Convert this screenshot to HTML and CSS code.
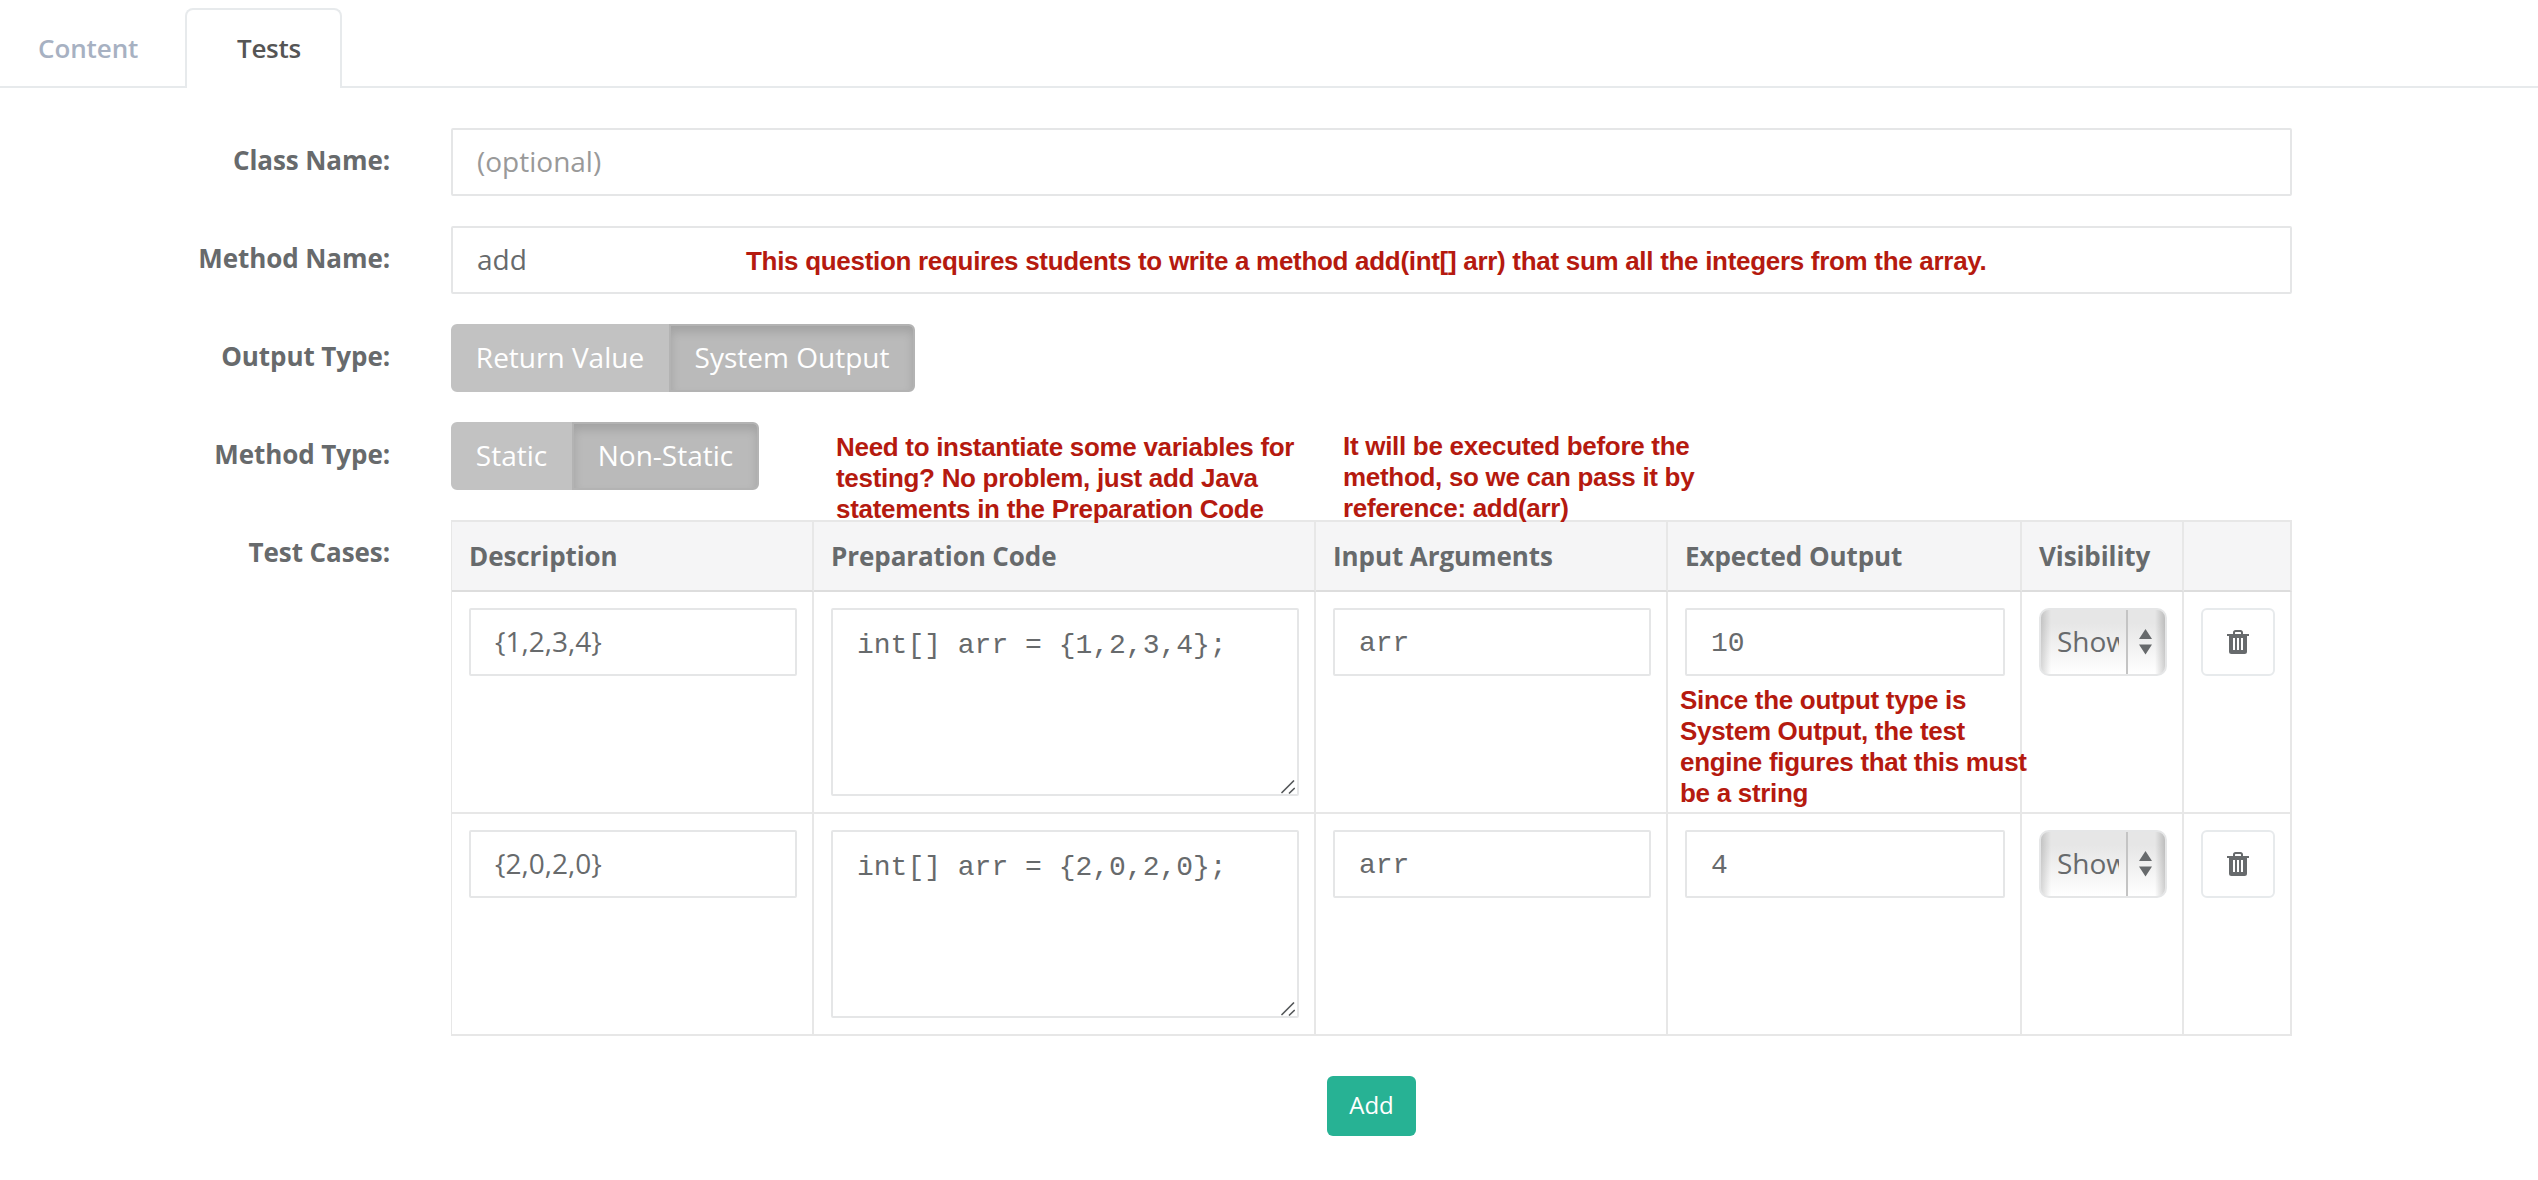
FILE: index.html
```html
<!DOCTYPE html>
<html lang="en">
<head>
<meta charset="utf-8">
<title>Tests</title>
<link rel="stylesheet" href="styles.css">
</head>
<body>
<svg class="defs" width="0" height="0">
  <symbol id="trash" viewBox="0 0 22 24"><path fill-rule="evenodd" d="M6 4V2.500C6 1 7 0 8.500 0h5C15 0 16 1 16 2.500V4h6v2h-2v15.500a2.500 2.500 0 0 1-2.500 2.500h-13A2.500 2.500 0 0 1 2 21.500V6H0V4zM8 4h6V2.500L13.500 2h-5L8 2.500zM6 8v12h2V8zM10 8v12h2V8zM14 8v12h2V8z"/></symbol>
  <symbol id="grip" viewBox="0 0 14 14"><path fill="none" stroke="#55585a" stroke-width="1.700" stroke-linecap="round" d="M1 12.500L12.500 1M8.500 13L13.200 8.500"/></symbol>
</svg>
<nav class="tabs"><a class="tab">Content</a><a class="tab active">Tests</a></nav>
<main class="form">
  <div class="row"><label>Class Name:</label><input class="field" placeholder="(optional)"></div>
  <div class="row"><label>Method Name:</label><input class="field" value="add"></div>
  <div class="row"><label>Output Type:</label><div class="group"><button class="return">Return Value</button><button class="on system">System Output</button></div></div>
  <div class="row"><label>Method Type:</label><div class="group"><button class="static">Static</button><button class="on nonstatic">Non-Static</button></div></div>
  <div class="row cases"><label>Test Cases:</label>
    <div>
    <table>
      <colgroup><col class="c1"><col class="c2"><col class="c3"><col class="c4"><col class="c5"><col class="c6"></colgroup>
      <thead><tr><th>Description</th><th>Preparation Code</th><th>Input Arguments</th><th>Expected Output</th><th>Visibility</th><th></th></tr></thead>
      <tbody>
      <tr>
        <td><input class="field" value="{1,2,3,4}"></td>
        <td><div class="area"><textarea class="field mono">int[] arr = {1,2,3,4};</textarea><svg class="grip"><use href="#grip"/></svg></div></td>
        <td><input class="field mono" value="arr"></td>
        <td><input class="field mono" value="10"></td>
        <td><div class="select"><span class="value"><span class="clip">Show</span></span><svg class="arrows" viewBox="0 0 13 26"><path d="M0 10L6.500 0L13 10zM0 15.500h13L6.500 25.500z"/></svg></div></td>
        <td><button class="delete"><svg><use href="#trash"/></svg></button></td>
      </tr>
      <tr>
        <td><input class="field" value="{2,0,2,0}"></td>
        <td><div class="area"><textarea class="field mono">int[] arr = {2,0,2,0};</textarea><svg class="grip"><use href="#grip"/></svg></div></td>
        <td><input class="field mono" value="arr"></td>
        <td><input class="field mono" value="4"></td>
        <td><div class="select"><span class="value"><span class="clip">Show</span></span><svg class="arrows" viewBox="0 0 13 26"><path d="M0 10L6.500 0L13 10zM0 15.500h13L6.500 25.500z"/></svg></div></td>
        <td><button class="delete"><svg><use href="#trash"/></svg></button></td>
      </tr>
      </tbody>
    </table>
    <button class="add">Add</button>
    </div>
  </div>
</main>
<p class="note question">This question requires students to write a method add(int[] arr) that sum all the integers from the array.</p>
<p class="note preparation">Need to instantiate some variables for<br>testing? No problem, just add Java<br>statements in the Preparation Code</p>
<p class="note arguments">It will be executed before the<br>method, so we can pass it by<br>reference: add(arr)</p>
<p class="note output">Since the output type is<br>System Output, the test<br>engine figures that this must<br>be a string</p>
</body>
</html>
```
FILE: styles.css
```css
* { box-sizing: border-box; }
body { margin: 0; height: 1180px; overflow: hidden; position: relative; background: #fff; color: #676a6c; font: 26px/36px "Open Sans", sans-serif; }
.defs { position: absolute; }
button, input, textarea { font: inherit; color: inherit; margin: 0; }

.tabs { display: flex; height: 88px; padding-top: 8px; box-shadow: inset 0 -2px #e7eaec; }
.tab { padding: 22px 48px 0 38px; width: 185px; font-weight: 600; letter-spacing: -.1px; color: #a7b1c2; }
.tab.active { width: 157px; padding: 20px 40px 0 50px; letter-spacing: -.3px; color: #555; background: #fff; border: 2px solid #e7eaec; border-bottom: 0; border-radius: 8px 8px 0 0; }

.form { display: grid; gap: 30px; padding: 40px 246px 0 0; }
.row { display: grid; grid-template-columns: 390px 1841px; column-gap: 61px; height: 68px; }
.row > label { text-align: right; padding-top: 14px; font-weight: 700; letter-spacing: -.08px; }
.field { display: block; width: 100%; height: 68px; padding: 0 24px 2px; border: 2px solid #e5e6e7; border-radius: 2px; background: #fff; font-size: 28px; line-height: 40px; outline: 0; }
.field::placeholder { color: #999; opacity: 1; }
.mono { padding: 2px 24px 0; font-family: "Liberation Mono", monospace; }

.group { display: flex; }
.group button { height: 68px; padding: 0 0 2px; border: 2px solid #c2c2c2; background: #c2c2c2; color: #fff; font-size: 28px; font-weight: 400; border-radius: 6px 0 0 6px; }
.group .on { border-color: #b3b3b3; background: #bababa; border-radius: 0 6px 6px 0; box-shadow: inset 0 6px 10px rgba(0,0,0,.125); }
.return { width: 218px; }
.system { width: 246px; }
.static { width: 121px; }
.nonstatic { width: 187px; }

table { width: 1841px; table-layout: fixed; border-spacing: 0; border-left: 1px solid #e7e7e7; }
.c1 { width: 362px; }
.c2 { width: 502px; }
.c3 { width: 352px; }
.c4 { width: 354px; }
.c5 { width: 162px; }
.c6 { width: 108px; }
th { height: 72px; padding: 0 0 0 17px; text-align: left; font-weight: 700; letter-spacing: -.08px; background: #f5f5f6; border: solid #e7e7e7; border-width: 2px 2px 2px 0; border-bottom-color: #ddd; }
td { height: 222px; padding: 16px 15px 0 17px; vertical-align: top; border: solid #e7e7e7; border-width: 0 2px 2px 0; }
.area { position: relative; }
textarea.field { height: 188px; padding-top: 16px; resize: none; overflow: hidden; }
.grip { position: absolute; right: 4px; bottom: 2px; width: 14px; height: 14px; }

.select { display: flex; align-items: center; width: 128px; height: 68px; border: 2px solid #e5e6e7; border-radius: 10px; background: linear-gradient(90deg, rgba(0,0,0,.15), transparent 10px, transparent 114px, rgba(0,0,0,.18)), linear-gradient(#e6e6e6 20%, #fff); }
.value { width: 87px; height: 64px; padding: 12px 0 0 16px; border-right: 2px solid #c4c4c4; font-size: 28px; line-height: 38px; }
.clip { display: block; width: 62px; overflow: hidden; }
.arrows { width: 13px; height: 26px; margin-left: 11px; fill: #676a6c; }
.delete { display: grid; place-items: center; width: 74px; height: 68px; padding: 0; border: 2px solid #e7eaec; border-radius: 6px; background: #fff; }
.delete svg { width: 22px; height: 24px; fill: #676a6c; }
.add { display: block; width: 89px; height: 60px; margin: 40px 0 0 876px; padding: 0 0 2px; border: 0; border-radius: 6px; background: #27b294; color: #fff; font-size: 24px; }

.note { position: absolute; margin: 0; color: #b51a0f; font: bold 26px/31px "Liberation Sans", Arial, sans-serif; letter-spacing: -.3px; white-space: nowrap; }
.question { left: 746px; top: 246px; }
.preparation { left: 836px; top: 432px; }
.arguments { left: 1343px; top: 431px; }
.output { left: 1680px; top: 685px; }
```
